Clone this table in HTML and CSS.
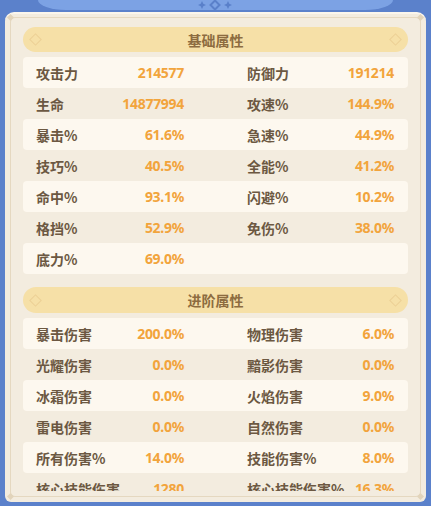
FILE: index.html
```html
<!DOCTYPE html>
<html lang="zh">
  <head>
    <meta charset="UTF-8" />
    <link rel="stylesheet" href="styles.css">
  </head>
  <body>
    <div class="band">
      <svg class="band-deco" width="40" height="10" viewBox="0 0 40 10">
        <path d="M7 1 L8.3 3.7 L11 5 L8.3 6.3 L7 9 L5.7 6.3 L3 5 L5.7 3.7 Z" fill="#5a80ca"/>
        <path d="M20 0.5 L24.5 5 L20 9.5 L15.5 5 Z" fill="none" stroke="#5a80ca" stroke-width="2"/>
        <path d="M33 1 L34.3 3.7 L37 5 L34.3 6.3 L33 9 L31.7 6.3 L29 5 L31.7 3.7 Z" fill="#5a80ca"/>
      </svg>
    </div>

    <div class="panel">
      <div class="inner">
        <span class="corner tl"></span>
        <span class="corner tr"></span>
        <span class="corner bl"></span>
        <span class="corner br"></span>

        <div class="scroll">
          <div class="title"><span class="gem"></span>基础属性<span class="gem"></span></div>
          <div class="row lit"><div class="cell"><span>攻击力</span><b>214577</b></div><div class="cell"><span>防御力</span><b>191214</b></div></div>
          <div class="row"><div class="cell"><span>生命</span><b>14877994</b></div><div class="cell"><span>攻速%</span><b>144.9%</b></div></div>
          <div class="row lit"><div class="cell"><span>暴击%</span><b>61.6%</b></div><div class="cell"><span>急速%</span><b>44.9%</b></div></div>
          <div class="row"><div class="cell"><span>技巧%</span><b>40.5%</b></div><div class="cell"><span>全能%</span><b>41.2%</b></div></div>
          <div class="row lit"><div class="cell"><span>命中%</span><b>93.1%</b></div><div class="cell"><span>闪避%</span><b>10.2%</b></div></div>
          <div class="row"><div class="cell"><span>格挡%</span><b>52.9%</b></div><div class="cell"><span>免伤%</span><b>38.0%</b></div></div>
          <div class="row lit"><div class="cell"><span>底力%</span><b>69.0%</b></div><div class="cell"></div></div>

          <div class="title second"><span class="gem"></span>进阶属性<span class="gem"></span></div>
          <div class="row lit"><div class="cell"><span>暴击伤害</span><b>200.0%</b></div><div class="cell"><span>物理伤害</span><b>6.0%</b></div></div>
          <div class="row"><div class="cell"><span>光耀伤害</span><b>0.0%</b></div><div class="cell"><span>黯影伤害</span><b>0.0%</b></div></div>
          <div class="row lit"><div class="cell"><span>冰霜伤害</span><b>0.0%</b></div><div class="cell"><span>火焰伤害</span><b>9.0%</b></div></div>
          <div class="row"><div class="cell"><span>雷电伤害</span><b>0.0%</b></div><div class="cell"><span>自然伤害</span><b>0.0%</b></div></div>
          <div class="row lit"><div class="cell"><span>所有伤害%</span><b>14.0%</b></div><div class="cell"><span>技能伤害%</span><b>8.0%</b></div></div>
          <div class="row"><div class="cell"><span>核心技能伤害</span><b>1280</b></div><div class="cell"><span>核心技能伤害%</span><b>16.3%</b></div></div>
        </div>
      </div>
    </div>
  </body>
</html>
```

FILE: styles.css
```css
body {
  margin: 0;
  height: 506px;
  overflow: hidden;
  background: #5b81cb;
  font-family: "Noto Sans CJK SC", "Noto Sans", sans-serif;
}
.band {
  height: 10px;
  margin: 0 38px;
  background: #7ca2e4;
  border-radius: 0 0 28px 28px / 0 0 10px 10px;
  display: flex;
  justify-content: center;
}
.band-deco {
  margin-left: -2px;
}
.panel {
  margin: 2px 5px 0 5px;
  height: 490px;
  box-sizing: border-box;
  padding: 3px 5px 5px 5px;
  background: #f3ecdf;
  border-radius: 9px 9px 6px 6px;
  border-top: 2px solid #fbf6ec;
}
.inner {
  position: relative;
  height: 100%;
  box-sizing: border-box;
  border: 1px solid #e5d8c0;
  border-radius: 5px;
}
.corner {
  position: absolute;
  width: 5px;
  height: 5px;
  background: #e2d4bb;
  transform: rotate(45deg);
}
.tl { left: -3px; top: -3px; }
.tr { right: -3px; top: -3px; }
.bl { left: -3px; bottom: -3px; }
.br { right: -3px; bottom: -3px; }
.scroll {
  margin-top: 2px;
  height: 471px;
  overflow: hidden;
  padding: 7px 12px 0 12px;
  box-sizing: border-box;
}
.title {
  height: 25px;
  border-radius: 13px;
  background: #f6e0a7;
  color: #8d6c40;
  font-size: 14px;
  font-weight: bold;
  display: flex;
  align-items: center;
  justify-content: space-between;
  padding: 0 6px;
  margin-bottom: 5px;
}
.title.second {
  margin-top: 13px;
  height: 26px;
}
.gem {
  width: 7px;
  height: 7px;
  border: 1.5px solid #ecd095;
  transform: rotate(45deg);
  margin: 0 2px;
}
.row {
  height: 31px;
  display: grid;
  grid-template-columns: 148px 147px;
  column-gap: 63px;
  padding-left: 13px;
  align-items: center;
  border-radius: 4px;
}
.row.lit {
  background: #fdf8ef;
}
.cell {
  display: flex;
  justify-content: space-between;
  align-items: center;
}
.cell span {
  font-size: 14px;
  font-weight: bold;
  color: #6c5842;
}
.cell b {
  font-family: "Noto Sans", sans-serif;
  font-size: 14px;
  font-weight: bold;
  color: #f2a43c;
  letter-spacing: -0.3px;
}
```
